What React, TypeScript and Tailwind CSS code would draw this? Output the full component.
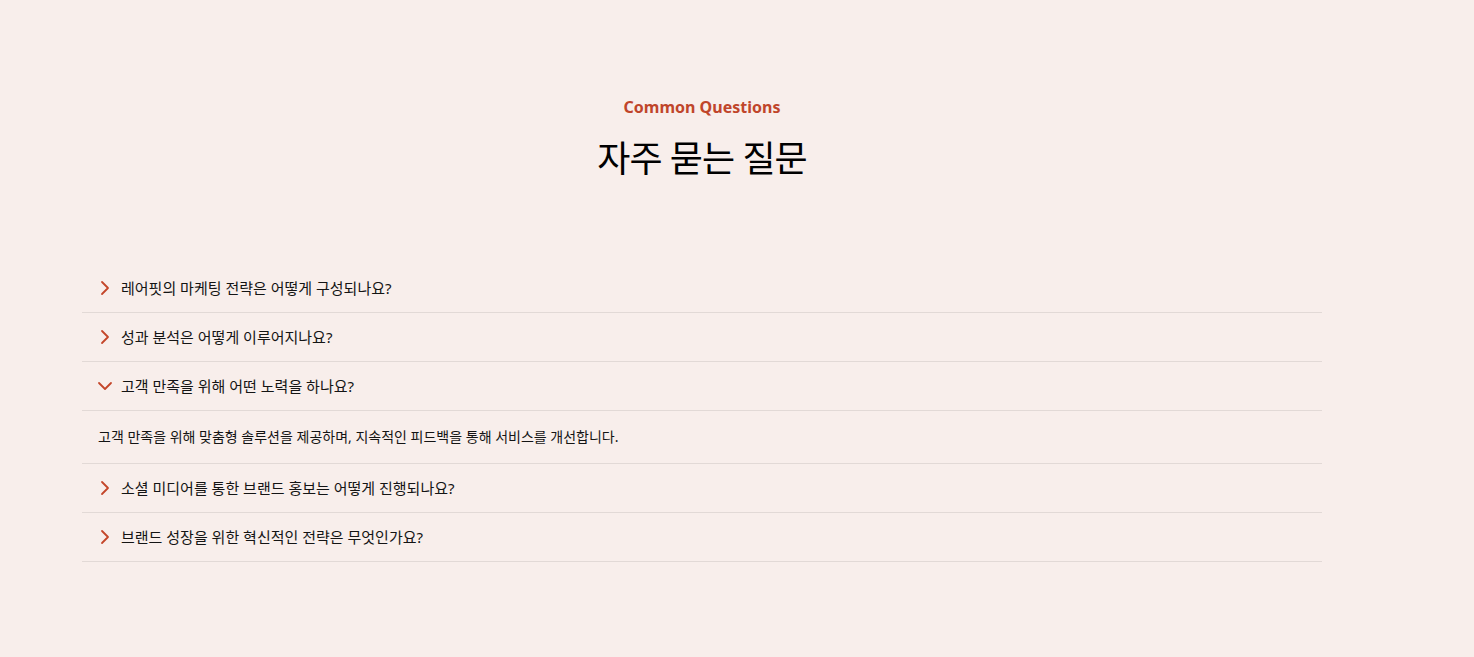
import { useState } from "react";
import { ChevronRight, ChevronDown } from "lucide-react";

const faqs = [
  {
    q: "레어핏의 마케팅 전략은 어떻게 구성되나요?",
    a: "레어핏은 브랜드의 목표와 타깃에 맞춘 데이터 기반 전략을 수립합니다.",
  },
  {
    q: "성과 분석은 어떻게 이루어지나요?",
    a: "캠페인별 지표를 정기적으로 측정하고 리포트로 공유합니다.",
  },
  {
    q: "고객 만족을 위해 어떤 노력을 하나요?",
    a: "고객 만족을 위해 맞춤형 솔루션을 제공하며, 지속적인 피드백을 통해 서비스를 개선합니다.",
  },
  {
    q: "소셜 미디어를 통한 브랜드 홍보는 어떻게 진행되나요?",
    a: "채널별 특성에 맞는 콘텐츠를 기획하고 운영합니다.",
  },
  {
    q: "브랜드 성장을 위한 혁신적인 전략은 무엇인가요?",
    a: "시장 트렌드를 분석하여 새로운 성장 기회를 발굴합니다.",
  },
];

export default function App() {
  const [open, setOpen] = useState<number | null>(2);

  return (
    <main
      className="min-h-screen bg-[#f8eeeb] pl-[82px] pr-[152px] pt-[94px] text-[#141414]"
      style={{ fontFamily: '"Noto Sans", "Noto Sans CJK KR", sans-serif' }}
    >
      <div className="text-center">
        <p className="text-[16px] font-bold leading-[26px] text-[#c0452a]">
          Common Questions
        </p>
        <h2 className="mt-[14px] text-[36px] font-normal leading-[50px] tracking-[-1px] text-black">
          자주 묻는 질문
        </h2>
      </div>

      <div className="mt-[80px]">
        {faqs.map((item, i) => (
          <div key={i} className="border-b border-[#e2d9d6]">
            <button
              onClick={() => setOpen(open === i ? null : i)}
              className="flex h-[48px] w-full items-center gap-1 pl-[11px] text-left text-[15px]"
            >
              {open === i ? (
                <ChevronDown size={24} strokeWidth={1.8} className="text-[#c4462a]" />
              ) : (
                <ChevronRight size={24} strokeWidth={1.8} className="text-[#c4462a]" />
              )}
              <span>{item.q}</span>
            </button>
            {open === i && (
              <div className="border-t border-[#e2d9d6] px-4 py-[14px] text-[14px] leading-[24px]">
                {item.a}
              </div>
            )}
          </div>
        ))}
      </div>
    </main>
  );
}
